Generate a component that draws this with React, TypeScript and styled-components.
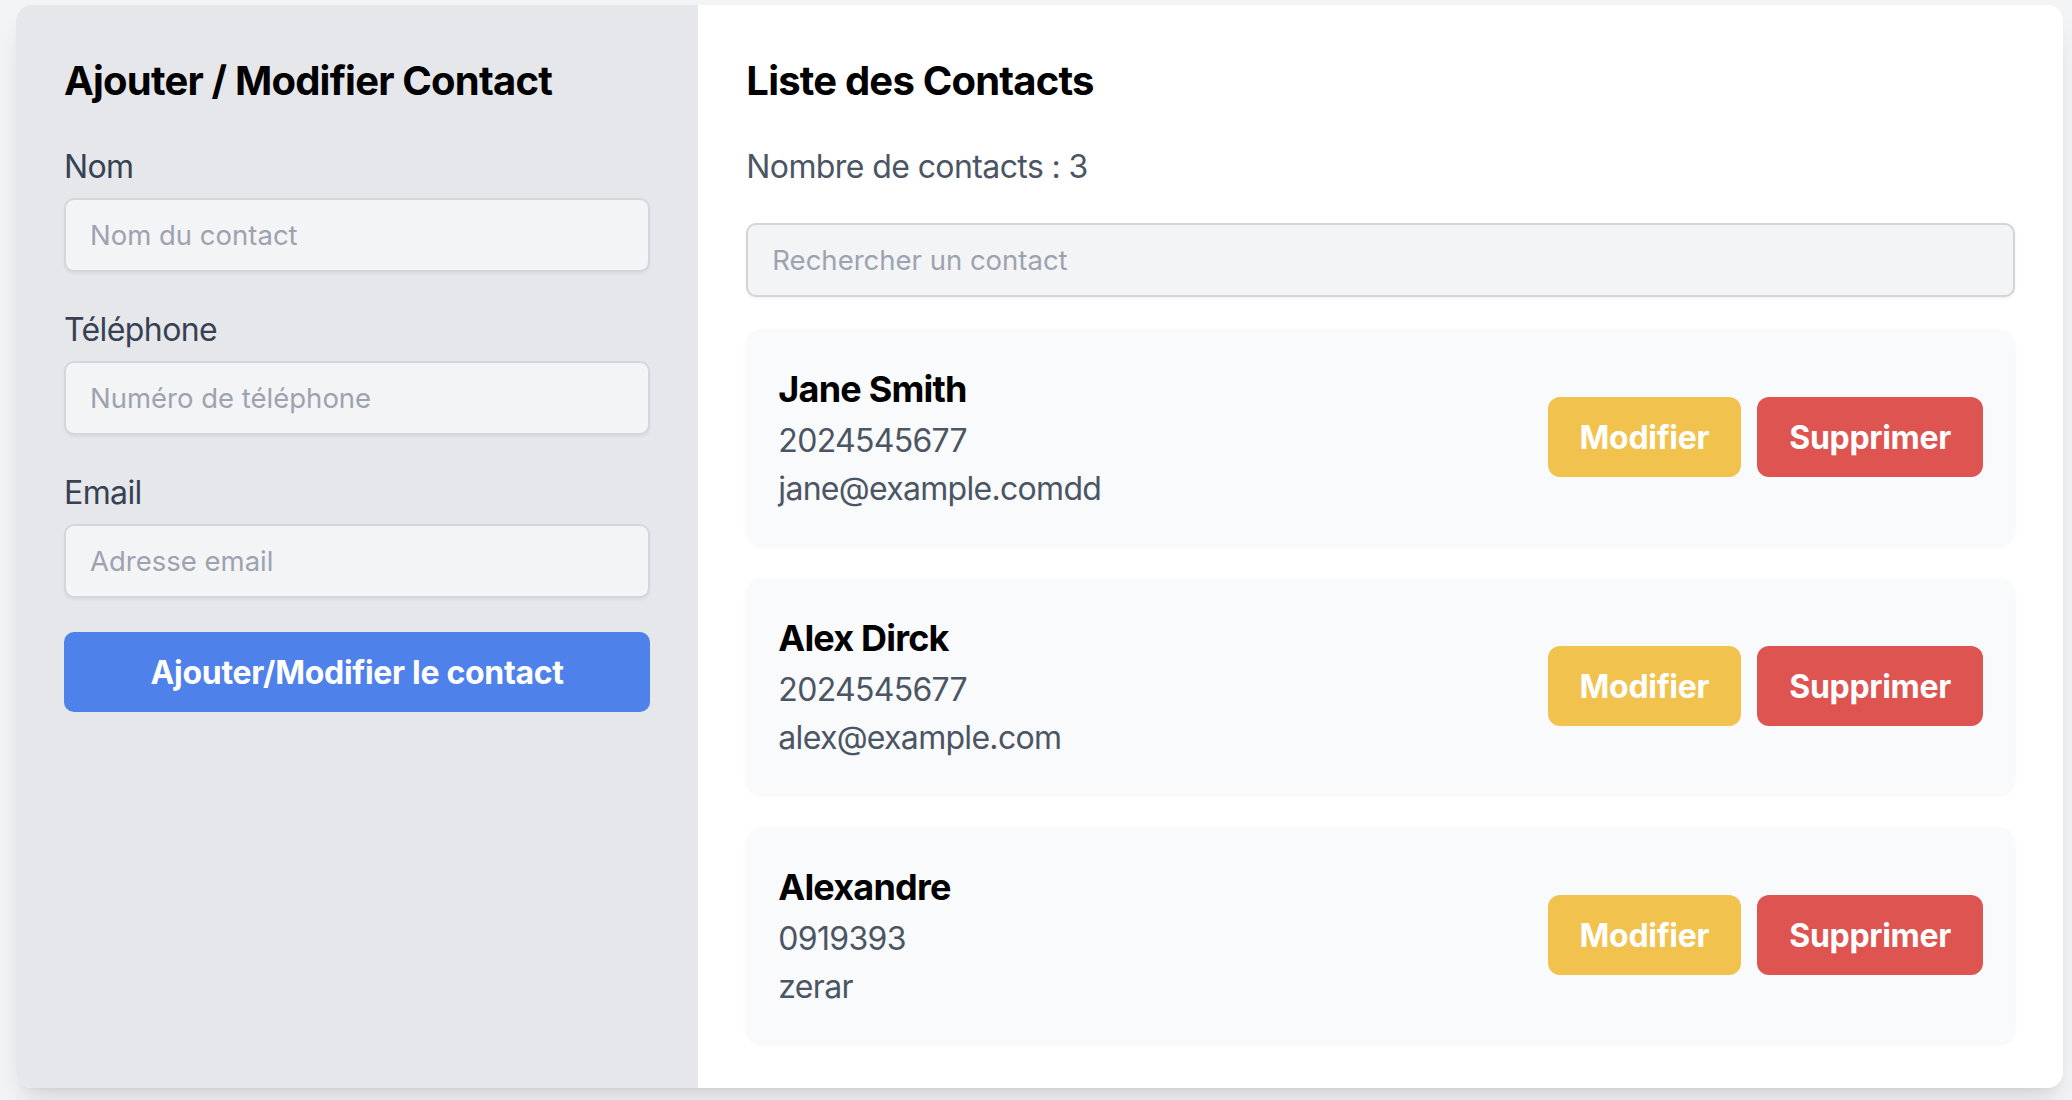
import React from "react";
import styled, { createGlobalStyle } from "styled-components";

const GlobalStyle = createGlobalStyle`
  html, body {
    margin: 0;
    padding: 0;
    background: #f3f4f6;
    font-family: Inter, "Noto Sans", "Liberation Sans", sans-serif;
  }
  * { box-sizing: border-box; }
`;

const Page = styled.div`
  padding: 5px 9px 12px 16px;
`;

const Shell = styled.div`
  display: grid;
  grid-template-columns: 1fr 2fr;
  height: 1083px;
  background: #ffffff;
  border-radius: 16px;
  overflow: hidden;
  box-shadow: 0 20px 30px -6px rgba(0, 0, 0, 0.1), 0 8px 12px -8px rgba(0, 0, 0, 0.1);
`;

const FormPanel = styled.section`
  background: #e5e7eb;
  padding: 48px;
`;

const ListPanel = styled.section`
  background: #ffffff;
  padding: 48px;
`;

const Title = styled.h2`
  margin: 0 0 34px;
  font-size: 40px;
  line-height: 56px;
  font-weight: 700;
  color: #000;
  letter-spacing: -0.8px;
`;

const Field = styled.div`
  display: flex;
  flex-direction: column;
  margin-bottom: 34px;
`;

const Label = styled.label`
  font-size: 32px;
  line-height: 48px;
  color: #374151;
  margin-bottom: 7px;
  letter-spacing: -0.6px;
`;

const TextInput = styled.input`
  display: block;
  width: 100%;
  height: 74px;
  padding: 0 24px;
  border: 2px solid #d4d6db;
  border-radius: 10px;
  background: #f3f4f6;
  font-family: inherit;
  font-size: 27.5px;
  color: #111827;
  box-shadow: 0 2px 3px rgba(0, 0, 0, 0.05);
  outline: none;
  &::placeholder {
    color: #9ca3af;
  }
`;

const SubmitButton = styled.button`
  display: block;
  width: 100%;
  height: 80px;
  border: none;
  border-radius: 10px;
  background: #4f81eb;
  color: #ffffff;
  font-family: inherit;
  font-size: 32px;
  font-weight: 700;
  letter-spacing: -0.3px;
  cursor: pointer;
`;

const Count = styled.p`
  margin: 0 0 32px;
  font-size: 32px;
  line-height: 48px;
  color: #4b5563;
  letter-spacing: -0.6px;
`;

const SearchInput = styled(TextInput)`
  border-color: #d1d5db;
  margin-bottom: 32px;
`;

const ContactList = styled.ul`
  list-style: none;
  margin: 0;
  padding: 0;
  display: flex;
  flex-direction: column;
  gap: 33px;
`;

const ContactCard = styled.li`
  display: flex;
  align-items: center;
  justify-content: space-between;
  padding: 32px;
  background: #f9fafb;
  border-radius: 16px;
  box-shadow: 0 2px 4px rgba(0, 0, 0, 0.04);
`;

const ContactInfo = styled.div`
  display: flex;
  flex-direction: column;
`;

const ContactName = styled.h3`
  margin: 0;
  font-size: 36px;
  line-height: 56px;
  font-weight: 700;
  color: #000;
  letter-spacing: -0.8px;
`;

const ContactLine = styled.p`
  margin: 0;
  font-size: 32px;
  line-height: 48px;
  color: #4b5563;
  letter-spacing: -0.7px;
`;

const Actions = styled.div`
  display: flex;
  gap: 16px;
`;

const ActionButton = styled.button<{ $tone: "edit" | "delete" }>`
  height: 80px;
  padding: 0 32px;
  border: none;
  border-radius: 12px;
  background: ${(p) => (p.$tone === "edit" ? "#f2c24e" : "#de5450")};
  color: #ffffff;
  font-family: inherit;
  font-size: 32px;
  font-weight: 700;
  letter-spacing: -0.3px;
  cursor: pointer;
`;

const contacts = [
  { name: "Jane Smith", phone: "2024545677", email: "jane@example.comdd" },
  { name: "Alex Dirck", phone: "2024545677", email: "alex@example.com" },
  { name: "Alexandre", phone: "0919393", email: "zerar" },
];

export default function App() {
  return (
    <>
      <GlobalStyle />
      <Page>
        <Shell>
          <FormPanel>
            <Title>Ajouter / Modifier Contact</Title>
            <Field>
              <Label htmlFor="nom">Nom</Label>
              <TextInput id="nom" placeholder="Nom du contact" />
            </Field>
            <Field>
              <Label htmlFor="tel">Téléphone</Label>
              <TextInput id="tel" placeholder="Numéro de téléphone" />
            </Field>
            <Field>
              <Label htmlFor="email">Email</Label>
              <TextInput id="email" placeholder="Adresse email" />
            </Field>
            <SubmitButton>Ajouter/Modifier le contact</SubmitButton>
          </FormPanel>
          <ListPanel>
            <Title>Liste des Contacts</Title>
            <Count>Nombre de contacts : {contacts.length}</Count>
            <SearchInput placeholder="Rechercher un contact" />
            <ContactList>
              {contacts.map((c) => (
                <ContactCard key={c.name}>
                  <ContactInfo>
                    <ContactName>{c.name}</ContactName>
                    <ContactLine>{c.phone}</ContactLine>
                    <ContactLine>{c.email}</ContactLine>
                  </ContactInfo>
                  <Actions>
                    <ActionButton $tone="edit">Modifier</ActionButton>
                    <ActionButton $tone="delete">Supprimer</ActionButton>
                  </Actions>
                </ContactCard>
              ))}
            </ContactList>
          </ListPanel>
        </Shell>
      </Page>
    </>
  );
}
